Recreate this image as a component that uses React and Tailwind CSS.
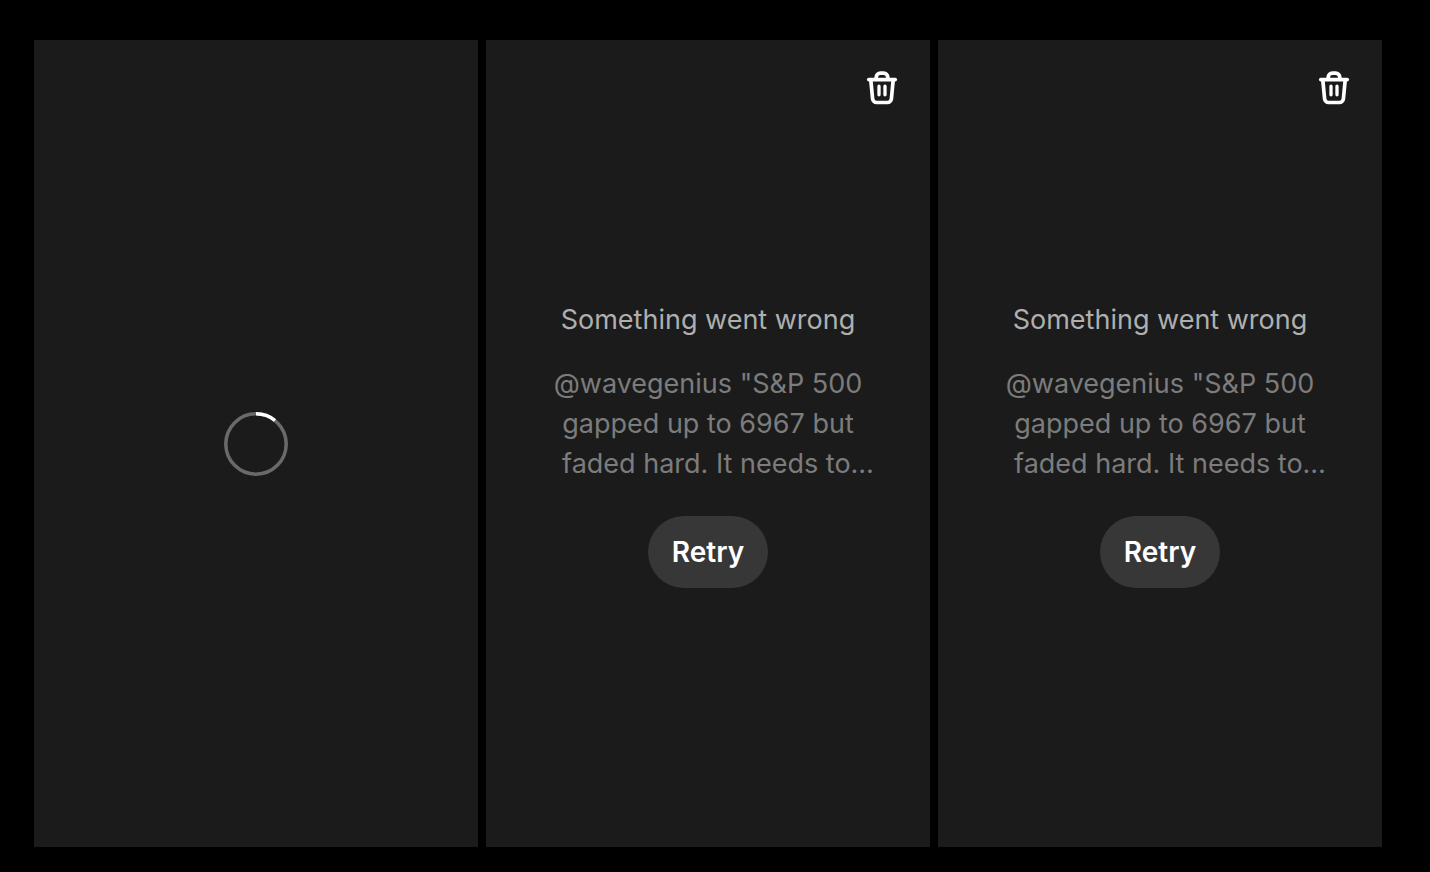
const failedPosts = [
  { id: 1, text: '@wavegenius "S&P 500 gapped up to 6967 but faded hard. It needs to…' },
  { id: 2, text: '@wavegenius "S&P 500 gapped up to 6967 but faded hard. It needs to…' },
];

function TrashIcon() {
  return (
    <svg
      className="size-10"
      viewBox="0 0 40 40"
      fill="none"
      stroke="currentColor"
      strokeWidth="3.7"
      strokeLinecap="round"
      strokeLinejoin="round"
      aria-hidden="true"
    >
      <path d="M6.8 11.6H33.2" />
      <path d="M14.2 11V9.4A4.2 4.2 0 0 1 18.4 5.2H21.6A4.2 4.2 0 0 1 25.8 9.4V11" />
      <path d="M8.8 11.8L10.6 30.9A4 4 0 0 0 14.6 34.5H25.4A4 4 0 0 0 29.4 30.9L31.2 11.8" />
      <path d="M17 18.2V26.8M23 18.2V26.8" strokeWidth="3.3" />
    </svg>
  );
}

function Spinner() {
  return (
    <svg className="size-16" viewBox="0 0 64 64" fill="none" strokeWidth="3.5" role="status" aria-label="Loading">
      <circle cx="32" cy="32" r="30.2" stroke="#6a6a6a" />
      <path d="M32 1.8A30.2 30.2 0 0 1 51 8.5" stroke="#ffffff" />
    </svg>
  );
}

function Panel({ children }) {
  return (
    <section className="relative flex flex-1 flex-col items-center justify-center bg-[#1b1b1b] px-12">
      {children}
    </section>
  );
}

function FailedPanel({ text }) {
  return (
    <Panel>
      <button type="button" aria-label="Delete" className="absolute top-7 right-7 text-white">
        <TrashIcon />
      </button>
      <h2 className="text-[27px] leading-10 text-[#afafaf]">Something went wrong</h2>
      <p className="mt-6 w-full max-w-[348px] text-center text-[27px] leading-10 text-[#7c7c7c]">
        {text}
        {/* Lets the ellipsis hang past the centred line */}
        <span className="-mr-5" />
      </p>
      <button
        type="button"
        className="mt-8 h-18 rounded-full bg-[#373737] px-6 text-[28px] leading-10 font-semibold text-white"
      >
        Retry
      </button>
    </Panel>
  );
}

export default function App() {
  return (
    <main className="flex min-h-screen gap-2 bg-black pt-10 pr-12 pb-[25px] pl-[34px] font-['Inter','Liberation_Sans',sans-serif]">
      <Panel>
        <Spinner />
      </Panel>
      {failedPosts.map((post) => (
        <FailedPanel key={post.id} text={post.text} />
      ))}
    </main>
  );
}
